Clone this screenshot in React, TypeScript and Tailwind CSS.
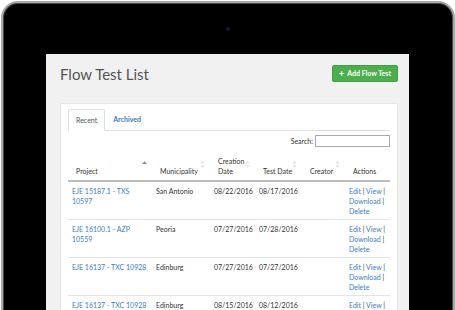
import React from "react";

const rows = [
  { p: ["EJE 15187.1 - TXS", "10597"], m: "San Antonio", c: "08/22/2016", t: "08/17/2016" },
  { p: ["EJE 16100.1 - AZP", "10559"], m: "Peoria", c: "07/27/2016", t: "07/28/2016" },
  { p: ["EJE 16137 - TXC 10928"], m: "Edinburg", c: "07/27/2016", t: "07/27/2016" },
  { p: ["EJE 16137 - TXC 10928"], m: "Edinburg", c: "08/15/2016", t: "08/12/2016" },
];

function SortIcon({ active }: { active?: boolean }) {
  if (active) {
    return (
      <svg width="5" height="9" viewBox="0 0 5 9" className="absolute right-[5px] top-[13px]">
        <path d="M0 4 L2.5 1 L5 4 Z" fill="#8a93c9" />
      </svg>
    );
  }
  return (
    <svg width="5" height="9" viewBox="0 0 5 9" className="absolute right-[5px] top-[13px]">
      <path d="M0.5 3.5 L2.5 1 L4.5 3.5 Z" fill="#e0e0e0" />
      <path d="M0.5 5.5 L2.5 8 L4.5 5.5 Z" fill="#e0e0e0" />
    </svg>
  );
}

const headers: { lines: string[]; icon: boolean; active?: boolean }[] = [
  { lines: ["Project"], icon: true, active: true },
  { lines: ["Municipality"], icon: true },
  { lines: ["Creation", "Date"], icon: true },
  { lines: ["Test Date"], icon: true },
  { lines: ["Creator"], icon: true },
  { lines: ["Actions"], icon: false },
];

export default function App() {
  return (
    <div
      className="w-[455px] h-[310px] overflow-hidden bg-white pl-[1px] pt-[1px]"
      style={{ fontFamily: "Lato, 'Open Sans', sans-serif" }}
    >
      <div className="w-[454px] h-[340px] rounded-[17px] bg-black border-2 border-[#a9a9a9] shadow-[inset_0_0_0_1px_#4a4a4a]">
        <div className="h-[51px] flex items-center justify-center">
          <div className="w-[4px] h-[4px] rounded-full bg-[#151a33]" />
        </div>
        <div className="ml-[43px] w-[363px] h-[280px] bg-[#f1f1f1] pl-[14px] pr-[11px] pt-[9px]">
          <div className="flex items-center justify-between h-[21px]">
            <div className="text-[15px] leading-[20px] text-[#555]">Flow Test List</div>
            <div className="h-[17px] px-[6px] flex items-center gap-[3px] rounded-[2px] bg-[#4cae4c] border border-[#42a042] text-white text-[7px] font-bold">
              <span className="text-[9px] leading-none">+</span>
              <span>Add Flow Test</span>
            </div>
          </div>
          <div className="mt-[19px] bg-white border border-[#e6e6e6] rounded-[2px] px-[7px] pt-[6px] h-[220px]">
            <div className="flex items-end h-[21px] border-b border-[#ddd]">
              <div className="h-[22px] -mb-[1px] px-[7px] flex items-center bg-white border border-[#ddd] border-b-white rounded-t-[2px] text-[7px] text-[#555]">
                Recent
              </div>
              <div className="h-[21px] ml-[1px] px-[7px] flex items-center text-[7px] font-bold text-[#3b7dc4]">
                Archived
              </div>
            </div>
            <div className="flex items-center justify-end gap-[2px] mt-[4px] h-[12px]">
              <span className="text-[7px] text-[#333]">Search:</span>
              <div className="w-[75px] h-[12px] border border-[#aaa] bg-white" />
            </div>
            <div className="grid grid-cols-[84px_58px_45px_47px_43px_45px] h-[35px] border-b-2 border-[#bdbdbd] text-[7px] leading-[10px] text-[#333]">
              {headers.map((h, i) => (
                <div key={i} className="relative flex flex-col justify-end pl-[8px] pb-[4px]">
                  {h.lines.map((l) => (
                    <div key={l}>{l}</div>
                  ))}
                  {h.icon && <SortIcon active={h.active} />}
                </div>
              ))}
            </div>
            {rows.map((r, i) => (
              <div
                key={i}
                className="grid grid-cols-[84px_58px_45px_47px_43px_45px] pt-[4px] pb-[3px] border-b border-[#e4e4e4] text-[7px] leading-[10px] text-[#333]"
              >
                <div className="pl-[4px] text-[#3b7dc4]">
                  {r.p.map((l) => (
                    <div key={l}>{l}</div>
                  ))}
                </div>
                <div className="pl-[4px]">{r.m}</div>
                <div className="pl-[4px]">{r.c}</div>
                <div className="pl-[4px]">{r.t}</div>
                <div className="pl-[4px]" />
                <div className="pl-[4px]">
                  <div>
                    <span className="text-[#3b7dc4]">Edit</span> | <span className="text-[#3b7dc4]">View</span> |
                  </div>
                  <div>
                    <span className="text-[#3b7dc4]">Download</span> |
                  </div>
                  <div className="text-[#3b7dc4]">Delete</div>
                </div>
              </div>
            ))}
          </div>
        </div>
      </div>
    </div>
  );
}
